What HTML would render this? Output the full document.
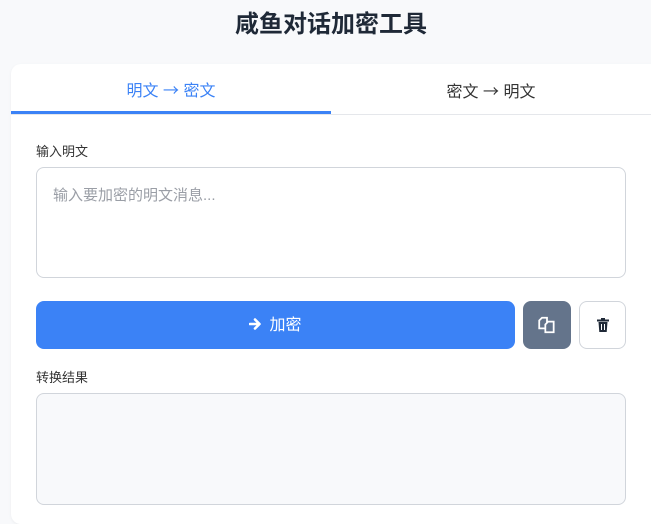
<!DOCTYPE html>
<html><head><meta charset="utf-8"><style>
*{box-sizing:border-box;margin:0;padding:0}
body{width:651px;height:524px;overflow:hidden;background:#f8f9fb;font-family:"Liberation Sans","Noto Sans CJK SC",sans-serif;position:relative;color:#333}
h1{position:absolute;top:9px;left:0;width:662px;text-align:center;font-size:24px;font-weight:bold;color:#1f2937;line-height:32px}
.card{position:absolute;left:11px;top:64px;width:650px;height:460px;background:#fff;border-radius:10px;box-shadow:0 1px 3px rgba(0,0,0,.05)}
.tabs{position:absolute;left:0;top:0;width:640px;height:51px;border-bottom:1px solid #e5e7eb}
.tab{position:absolute;top:0;width:320px;height:51px;text-align:center;line-height:50px;font-size:16px}
.tab span{font-family:"Noto Sans CJK SC",sans-serif}
.t1{left:0;color:#3b82f6;border-bottom:3px solid #3b82f6;height:50px;line-height:50px}
.t2{left:320px;color:#333;line-height:52px}
.lbl{position:absolute;left:25px;font-size:13px;color:#333}
.box{position:absolute;left:25px;width:590px;border:1px solid #d1d5db;border-radius:8px}
.ph{padding:16px;font-size:15px;color:#9a9ea6}
.btn{position:absolute;top:237px;height:48px;border-radius:8px}
</style></head><body>
<h1>咸鱼对话加密工具</h1>
<div class="card">
<div class="tabs"><div class="tab t1">明文 <span>→</span> 密文</div><div class="tab t2">密文 <span>→</span> 明文</div></div>
<div class="lbl" style="top:77px">输入明文</div>
<div class="box" style="top:103px;height:111px"><div class="ph">输入要加密的明文消息...</div></div>
<div class="btn" style="left:25px;width:479px;background:#3b82f6;color:#fff;font-size:16px;text-align:center;line-height:50px">
<svg width="14" height="14" viewBox="0 0 14 14" style="vertical-align:-1px;margin-right:6px"><path d="M1 7h9M6 2.5l4.5 4.5L6 11.5" stroke="#fff" stroke-width="2.6" fill="none" stroke-linecap="round" stroke-linejoin="round"/></svg>加密</div>
<div class="btn" style="left:512px;width:48px;background:#64748b">
<svg width="20" height="20" viewBox="0 0 18 18" style="position:absolute;left:14px;top:14px"><path d="M2 5l2.5-2.5H9V12H2z" fill="none" stroke="#fff" stroke-width="1.6"/><path d="M7.5 8.5L10 6h5v9.5H7.5z" fill="#64748b" stroke="#fff" stroke-width="1.6"/></svg></div>
<div class="btn" style="left:568px;width:47px;background:#fff;border:1px solid #d1d5db">
<svg width="12" height="14" viewBox="0 0 12 14" style="position:absolute;left:17px;top:16px"><rect x="0" y="1.5" width="12" height="2" fill="#1f2937"/><rect x="4" y="0" width="4" height="2" fill="#1f2937"/><path d="M1.5 4h9l-.8 10H2.3z" fill="#1f2937"/><path d="M4.5 6v6M7.5 6v6" stroke="#fff" stroke-width="1"/></svg></div>
<div class="lbl" style="top:303px">转换结果</div>
<div class="box" style="top:329px;height:112px;background:#f8f9fb"></div>
</div>
</body></html>
